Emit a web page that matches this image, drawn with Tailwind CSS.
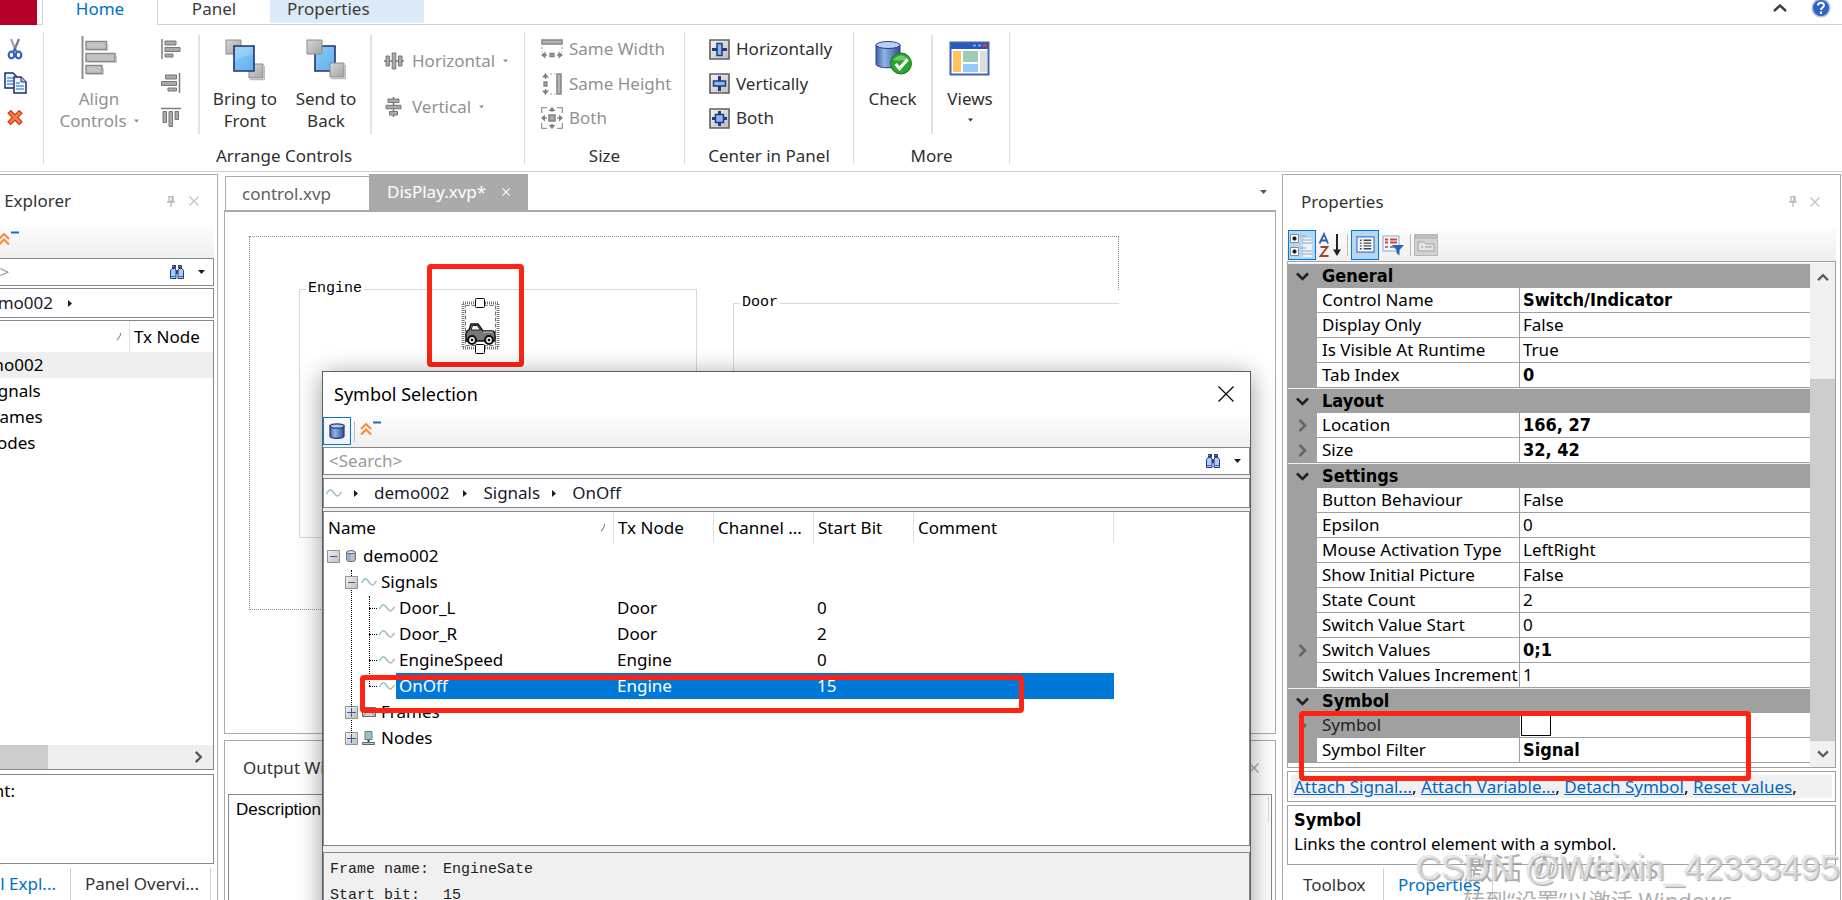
<!DOCTYPE html>
<html lang="en">
<head>
    <meta charset="UTF-8">
    <meta name="viewport" content="width=device-width, initial-scale=1.0">
    <title>Panel Designer</title>
    <script src="https://cdn.jsdelivr.net/npm/@tailwindcss/browser@4"></script>
</head>
<body class="relative flex h-screen flex-col overflow-hidden bg-white font-['Noto_Sans','Noto_Sans_CJK_SC',sans-serif] text-[17px] leading-6 text-black">

    <!-- Shared icons -->
    <svg class="absolute h-0 w-0">
        <defs>
            <linearGradient id="gGrey" x1="0" y1="0" x2="1" y2="1"><stop offset="0" stop-color="#d6d6d6"/><stop offset="1" stop-color="#a4a4a4"/></linearGradient>
            <linearGradient id="gSky" x1="0" y1="0" x2="1" y2="1"><stop offset="0" stop-color="#8ccbf5"/><stop offset="1" stop-color="#5fb0ee"/></linearGradient>
            <linearGradient id="gDb" x1="0" y1="0" x2="1" y2="0"><stop offset="0" stop-color="#3f62ab"/><stop offset="0.35" stop-color="#8fb4e6"/><stop offset="1" stop-color="#2f4f97"/></linearGradient>
            <linearGradient id="gBox" x1="0" y1="0" x2="1" y2="1"><stop offset="0" stop-color="#f4f4f4"/><stop offset="1" stop-color="#bdbdbd"/></linearGradient>
        </defs>
        <symbol id="pin" viewBox="0 0 8 11"><path d="M2 .5h4v5H2zM0 6h8M4 6v5M5 1v4" fill="none" stroke="#b9b9b9" stroke-width="1.3"/></symbol>
        <symbol id="cross" viewBox="0 0 10 10"><path d="M.5.5l9 9M9.500.5l-9 9" fill="none" stroke="currentColor" stroke-width="1.3"/></symbol>
        <symbol id="down" viewBox="0 0 7 4"><path d="M0 0h7L3.500 4z" fill="currentColor"/></symbol>
        <symbol id="right" viewBox="0 0 4 7"><path d="M0 0v7l4-3.500z" fill="currentColor"/></symbol>
        <symbol id="sort" viewBox="0 0 5 8"><path d="M4.500 0v2L1 7.500" fill="none" stroke="#8a8a8a" stroke-width="1.200"/></symbol>
        <symbol id="chevDown" viewBox="0 0 13 9"><path d="M1 1.500l5.500 5.500L12 1.500" fill="none" stroke="currentColor" stroke-width="2.600"/></symbol>
        <symbol id="chevRight" viewBox="0 0 9 13"><path d="M1.500 1l5.500 5.500L1.500 12" fill="none" stroke="currentColor" stroke-width="2.600"/></symbol>
        <symbol id="binocs" viewBox="0 0 14 14">
            <path d="M.5 5.500L2 3.500h3l1 2v8H.5zM13.500 5.500L12 3.500H9l-1 2v8h5.500z" fill="#9fd0ff" stroke="#2c3570"/>
            <path d="M2 0h4v3.500H2zM8 0h4v3.500H8zM6 5h2v4H6z" fill="#3a3f6e"/><path d="M1 11.500h4.500M8.500 11.500H13" stroke="#4668b0"/><path d="M2.500 1.500h1M9.500 1.500h1" stroke="#9fb4e0"/>
        </symbol>
        <symbol id="collapse" viewBox="0 0 21 14">
            <path d="M1 8l5-5 5 5M1 13.500l5-5 5 5" fill="none" stroke="#ff8a3d" stroke-width="2.200"/><path d="M13 1.500h8" stroke="#1a6fc4" stroke-width="2"/>
        </symbol>
        <symbol id="wave" viewBox="0 0 16 10">
            <path d="M.5 6C2.500 2.500 4 1.500 5 2c1.600.6 2.200 2 3.200 3.400" fill="none" stroke="#8fc4cf" stroke-width="1.500"/>
            <path d="M8 5c1.200 1.700 2.200 3 3.400 3 1.400 0 2.500-1.500 4.100-4" fill="none" stroke="#b5b5b5" stroke-width="1.500"/>
        </symbol>
        <symbol id="dbBlue" viewBox="0 0 16 16">
            <path d="M1 3v10c0 3 14 3 14 0V3z" fill="url(#gDb)" stroke="#353a7d" stroke-width="1.300"/><ellipse cx="8" cy="3" rx="7" ry="2.200" fill="#a8c8f0" stroke="#353a7d" stroke-width="1.300"/>
        </symbol>
        <symbol id="dbGrey" viewBox="0 0 10 12">
            <path d="M.7 2v8c0 2 8.600 2 8.600 0V2z" fill="#bfc3cc" stroke="#5a5f70"/><path d="M1.500 3.500h3v7h-3z" fill="#8cb2d4"/><ellipse cx="5" cy="2.200" rx="4.300" ry="1.600" fill="#dfe6ee" stroke="#5a5f70"/>
        </symbol>
        <symbol id="minus" viewBox="0 0 13 13"><path d="M.5.5h12v12H.5z" fill="url(#gBox)" stroke="#929292"/><path d="M3 6.500h7" stroke="#3a56a5"/></symbol>
        <symbol id="plus" viewBox="0 0 13 13"><path d="M.5.5h12v12H.5z" fill="url(#gBox)" stroke="#929292"/><path d="M2 6.500h9M6.500 2v9" stroke="#3a56a5"/></symbol>
    </svg>

    <!-- Ribbon tabs -->
    <nav class="flex h-[25px] shrink-0 items-stretch text-[#3c3c3c]">
        <button class="w-[37px] bg-[#b5002c]" aria-label="File"></button>
        <div class="w-[5px] border-b border-[#d0d0d0]"></div>
        <a href="#" class="flex w-[116px] items-start justify-center border-x border-[#d0d0d0] leading-[18px] text-[#0070c8]">Home</a>
        <a href="#" class="flex w-[112px] items-start justify-center border-b border-[#d0d0d0] leading-[18px]">Panel</a>
        <div class="flex w-[154px] border-b border-[#d0d0d0]"><a href="#" class="h-[23px] w-full bg-[#dce9f7] pl-[17px] leading-[18px]">Properties</a></div>
        <div class="flex flex-1 items-start justify-end gap-6 border-b border-[#d0d0d0] pr-[11px]">
            <button aria-label="Collapse ribbon" class="pt-1"><svg class="h-2 w-3.5" viewBox="0 0 14 8"><path d="M1 7l6-5.500L13 7" fill="none" stroke="#3f3f3f" stroke-width="2.400"/></svg></button>
            <button aria-label="Help"><svg class="h-[18px] w-5" viewBox="0 2 20 18"><circle cx="10" cy="10" r="8.800" fill="#2f62c4" stroke="#b4c4dc" stroke-width="1.600"/><path d="M7 7.500C7 4 13 4 13 7.200c0 2.300-3 2.300-3 4.800M10 13.500V16" fill="none" stroke="#fff" stroke-width="2"/></svg></button>
        </div>
    </nav>

    <!-- Ribbon -->
    <section class="flex h-[147px] shrink-0 border-b border-[#d0d0d0] pt-[7px] pb-[7px] text-[#303030]">
        <div class="flex w-11 flex-col border-r border-[#dcdcdc]">
            <button class="flex h-[34px] items-center pl-[7px]" aria-label="Cut">
                <svg class="h-[22px] w-4" viewBox="0 0 16 22"><path d="M4 1l5.500 13" stroke="#9aa7b8" stroke-width="2.200"/><path d="M12 1L6.500 14" stroke="#6d7c90" stroke-width="2.200"/><ellipse cx="4.500" cy="17" rx="2.800" ry="3.400" fill="none" stroke="#2f5fc2" stroke-width="2.200"/><ellipse cx="11.500" cy="17" rx="2.800" ry="3.400" fill="none" stroke="#2f5fc2" stroke-width="2.200"/><path d="M6 13l2-3 2 3z" fill="#2f5fc2"/></svg>
            </button>
            <button class="flex h-[34px] items-center pl-1" aria-label="Copy">
                <svg class="h-[22px] w-[23px]" viewBox="0 0 23 22"><path d="M1 1h8l4 4v11H1z" fill="#f3f8ff" stroke="#22287a" stroke-width="1.500"/><path d="M3 6h6M3 9h6M3 12h6" stroke="#4e9be0" stroke-width="1.300"/><path d="M10 5h7l5 5v11H10z" fill="#f3f8ff" stroke="#22287a" stroke-width="1.500"/><path d="M17 5v5h5" fill="#b7c6e8" stroke="#22287a"/><path d="M12 11h4M12 14h8M12 17h8" stroke="#4e9be0" stroke-width="1.500"/></svg>
            </button>
            <button class="flex h-[34px] items-center pl-[7px]" aria-label="Delete">
                <svg class="h-[15px] w-4" viewBox="0 0 16 16"><path d="M3.500 3.500l9 9M12.500 3.500l-9 9" stroke="#d23a14" stroke-width="5.400" stroke-linecap="square"/><path d="M3.500 3.500l9 9M12.500 3.500l-9 9" stroke="#ff7f50" stroke-width="2.600" stroke-linecap="square"/></svg>
            </button>
        </div>

        <div class="flex w-[481px] flex-col justify-between border-r border-[#dcdcdc]">
            <div class="flex h-[105px] pl-3">
                <button class="flex w-[86px] flex-col items-center pt-1 leading-[22px] text-[#919191]">
                    <svg class="mb-2 h-11 w-9" viewBox="0 0 36 44"><path d="M1.500 0v43" stroke="#8f8f8f" stroke-width="2"/><g stroke="#8a8a8a" stroke-width="1.400" fill="#c2c2c2"><path d="M5 5.500h20.500v8H5zM5 17.500h29v8H5zM5 29.500h16v8H5z"/></g><path d="M7 14.500h20V8M7 26.500h28.500V20M7 38.500h15.500V32" fill="none" stroke="#c9c9c9"/></svg>
                    <span>Align</span>
                    <span class="flex items-center gap-[7px]">Controls <svg class="h-1 w-[5px]"><use href="#down"/></svg></span>
                </button>
                <div class="flex w-14 flex-col items-center pl-0.5">
                    <button class="flex h-[34px] items-center" aria-label="Align left"><svg class="h-5 w-5" viewBox="0 0 20 20"><path d="M1 0v20" stroke="#7d7d7d" stroke-width="1.500"/><path d="M4 2h11v4H4zM4 8.500h15v4H4zM4 15h8v3H4z" fill="#aaa" stroke="#777"/></svg></button>
                    <button class="flex h-[34px] items-center" aria-label="Align right"><svg class="h-5 w-5" viewBox="0 0 20 20"><path d="M18.500 0v20" stroke="#7d7d7d" stroke-width="1.500"/><path d="M4.500 2h11v4h-11zM.5 8.500h15v4H.5zM7 15h8.500v3H7z" fill="#aaa" stroke="#777"/></svg></button>
                    <button class="flex h-[34px] items-center" aria-label="Align top"><svg class="h-5 w-5" viewBox="0 0 20 20"><path d="M0 1.500h20" stroke="#7d7d7d" stroke-width="1.500"/><path d="M2 4.500h3.500v11H2zM8 4.500h3.500v15H8zM14 4.500h3.500v8H14z" fill="#aaa" stroke="#777"/></svg></button>
                </div>
                <div class="my-[3px] w-0.5 bg-[#e2e2e2]"></div>
                <button class="flex w-[90px] flex-col items-center pt-[7px] leading-[22px]">
                    <svg class="mb-[7px] h-[42px] w-10" viewBox="0 0 40 42"><path d="M1 1h15v14H1z" fill="url(#gGrey)" stroke="#8b8b8b"/><path d="M24 25h14v14H24z" fill="url(#gGrey)" stroke="#8b8b8b"/><path d="M25 40.500h14.500V27" fill="none" stroke="#bbb" stroke-width="1.500"/><path d="M9 7h20v25H9z" fill="url(#gSky)" stroke="#25306f" stroke-width="1.600"/><path d="M10 8h18v8q-9 0-18 6z" fill="#fff" opacity=".2"/></svg>
                    <span>Bring to</span><span>Front</span>
                </button>
                <button class="flex w-[72px] flex-col items-center pt-[7px] leading-[22px]">
                    <svg class="mb-[7px] h-[42px] w-10" viewBox="0 0 40 42"><path d="M9 7h20v25H9z" fill="url(#gSky)" stroke="#25306f" stroke-width="1.600"/><path d="M1 1h15v14H1z" fill="url(#gGrey)" stroke="#8b8b8b"/><path d="M24 24h14v14H24z" fill="url(#gGrey)" stroke="#8b8b8b"/><path d="M25 39.500h14.500V26" fill="none" stroke="#bbb" stroke-width="1.500"/></svg>
                    <span>Send to</span><span>Back</span>
                </button>
                <div class="my-[3px] ml-2 w-0.5 bg-[#e2e2e2]"></div>
                <div class="flex flex-col pt-1.5 pl-3 text-[#919191]">
                    <button class="flex h-[46px] items-center gap-2">
                        <svg class="h-[18px] w-5" viewBox="0 0 20 18"><path d="M0 9h20" stroke="#777" stroke-width="1.500"/><path d="M2 4h3.500v10H2zM8.200 1h3.600v16H8.200zM14.500 4H18v10h-3.500z" fill="#aaa" stroke="#777"/></svg>
                        Horizontal <svg class="h-1 w-[5px]"><use href="#down"/></svg>
                    </button>
                    <button class="flex h-[46px] items-center gap-2">
                        <svg class="h-5 w-5" viewBox="0 0 20 20"><path d="M9.500 0v20" stroke="#777" stroke-width="1.500"/><path d="M4 2h11v3.500H4zM2 8.300h15v3.500H2zM5.500 14.500h8V18h-8z" fill="#aaa" stroke="#777"/></svg>
                        Vertical <svg class="h-1 w-[5px]"><use href="#down"/></svg>
                    </button>
                </div>
            </div>
            <div class="text-center leading-4">Arrange Controls</div>
        </div>

        <div class="flex w-40 flex-col justify-between border-r border-[#dcdcdc]">
            <div class="flex flex-col pl-4 text-[#919191]">
                <button class="flex h-[34px] items-center gap-1.5"><svg class="h-[22px] w-[22px]" viewBox="0 0 22 22"><path d="M1 2h20v4H1z" fill="#b5b5b5" stroke="#858585" stroke-width="1.500"/><path d="M1 9v5M21 9v5" stroke="#999" stroke-dasharray="2 2"/><path d="M0 17l4.500-3.500v7zM22 17l-4.500-3.500v7z" fill="#808080"/><path d="M3 17h3M16 17h3" stroke="#808080" stroke-width="1.500"/><path d="M9 15.500h4v3H9z" fill="#aaa" stroke="#808080" stroke-width="1.300"/></svg>Same Width</button>
                <button class="flex h-[35px] items-center gap-1.5"><svg class="h-[22px] w-[22px]" viewBox="0 0 22 22"><path d="M16 1h4v20h-4z" fill="#b5b5b5" stroke="#858585" stroke-width="1.500"/><path d="M9 1h5M9 21h5" stroke="#999" stroke-dasharray="2 2"/><path d="M4.500 0L1 4.500h7zM4.500 22L1 17.500h7z" fill="#808080"/><path d="M4.500 3v3M4.500 16v3" stroke="#808080" stroke-width="1.500"/><path d="M3 9h3v4H3z" fill="#aaa" stroke="#808080" stroke-width="1.300"/></svg>Same Height</button>
                <button class="flex h-[34px] items-center gap-1.5"><svg class="h-[22px] w-[22px]" viewBox="0 0 22 22"><path d="M6 .7H.7V6M16 .7h5.300V6M6 21.300H.7V16M16 21.300h5.300V16" fill="none" stroke="#999" stroke-width="1.300"/><path d="M11 0l3.500 4h-7zM11 22l3.500-4h-7zM0 11l4-3.500v7zM22 11l-4-3.500v7z" fill="#808080"/><path d="M3 11h3M16 11h3M11 3v2M11 17v2" stroke="#808080" stroke-width="1.500"/><path d="M8 8h6v6H8z" fill="#aaa" stroke="#808080" stroke-width="1.500"/></svg>Both</button>
            </div>
            <div class="text-center leading-4">Size</div>
        </div>

        <div class="flex w-[169px] flex-col justify-between border-r border-[#dcdcdc]">
            <div class="flex flex-col pl-6">
                <button class="flex h-[34px] items-center gap-1.5"><svg class="h-[21px] w-[21px]" viewBox="0 0 21 21"><path d="M1 1h19v19H1z" fill="url(#gBox)" stroke="#5f5f5f" stroke-width="1.600"/><path d="M3 10.500h15" stroke="#2b3478" stroke-width="3"/><path d="M8 4.500h5v12H8z" fill="#7cc0f2" stroke="#2b3478" stroke-width="1.500"/></svg>Horizontally</button>
                <button class="flex h-[35px] items-center gap-1.5"><svg class="h-[21px] w-[21px]" viewBox="0 0 21 21"><path d="M1 1h19v19H1z" fill="url(#gBox)" stroke="#5f5f5f" stroke-width="1.600"/><path d="M10.500 3v15" stroke="#2b3478" stroke-width="3"/><path d="M4.500 8h12v5h-12z" fill="#7cc0f2" stroke="#2b3478" stroke-width="1.500"/></svg>Vertically</button>
                <button class="flex h-[34px] items-center gap-1.5"><svg class="h-[21px] w-[21px]" viewBox="0 0 21 21"><path d="M1 1h19v19H1z" fill="url(#gBox)" stroke="#5f5f5f" stroke-width="1.600"/><path d="M10.500 3v15M3 10.500h15" stroke="#2b3478" stroke-width="3"/><path d="M6.500 6.500h8v8h-8z" fill="#7cc0f2" stroke="#2b3478" stroke-width="1.500"/></svg>Both</button>
            </div>
            <div class="text-center leading-4">Center in Panel</div>
        </div>

        <div class="flex w-[156px] flex-col justify-between border-r border-[#dcdcdc]">
            <div class="flex h-[105px]">
                <button class="flex w-[77px] flex-col items-center pt-2 leading-[22px]">
                    <svg class="mb-2.5 h-[38px] w-[38px]" viewBox="0 0 38 38"><path d="M2 5v19c0 5 24 5 24 0V5z" fill="url(#gDb)" stroke="#2d3c80"/><ellipse cx="14" cy="5" rx="12" ry="3.500" fill="#b6d2f3" stroke="#2d3c80"/><circle cx="27" cy="23.500" r="10.500" fill="#2ea32e" stroke="#1b701d"/><path d="M19 20q8-9 16 0q-8 1-16 0z" fill="#fff" opacity=".35"/><path d="M21.500 24l4 4.500 8-9" fill="none" stroke="#fff" stroke-width="3.200"/></svg>
                    <span>Check</span>
                </button>
                <div class="my-[3px] w-0.5 bg-[#e2e2e2]"></div>
                <button class="flex w-[74px] flex-col items-center pt-2 leading-[22px]">
                    <svg class="mb-2.5 h-[38px] w-[42px]" viewBox="0 0 42 38"><path d="M1.500 2.500h38v32h-38z" fill="#fff" stroke="#4363b5" stroke-width="2"/><path d="M2 3h37v6H2z" fill="#2d56c0"/><path d="M24 5.500h3M29 5.500h3" stroke="#9db8f0" stroke-width="1.600"/><path d="M34 4h3.500v3H34z" fill="#e43a2a"/><path d="M4 11h8v21H4z" fill="#ffc45c"/><path d="M14 11h15v11H14z" fill="#9ccdb8"/><path d="M14 24h15v8H14z" fill="#94c9fb"/><path d="M31 11h7v21h-7z" fill="#dedede"/></svg>
                    <span>Views</span>
                    <svg class="mt-2 h-1 w-[5px]"><use href="#down"/></svg>
                </button>
            </div>
            <div class="text-center leading-4">More</div>
        </div>
    </section>

    <main class="flex min-h-0 flex-1 gap-1.5 pt-0.5 pr-px">
        <!-- Symbol explorer -->
        <aside class="flex w-[218px] shrink-0 flex-col border-t border-r border-[#a9a9a9] pr-[3px]">
            <div class="flex h-[52px] shrink-0 items-center text-[#333]">
                <div class="flex w-[71px] justify-end overflow-hidden whitespace-nowrap">Symbol Explorer</div>
                <button class="ml-auto" aria-label="Pin"><svg class="h-[11px] w-2"><use href="#pin"/></svg></button>
                <button class="mr-[15px] ml-3.5 text-[#c3c3c3]" aria-label="Close"><svg class="h-2.5 w-2.5"><use href="#cross"/></svg></button>
            </div>
            <div class="h-[31px] shrink-0 bg-linear-to-b from-[#fcfcfc] to-[#efefef] pt-1">
                <button class="-ml-0.5 block" aria-label="Collapse all"><svg class="h-3.5 w-[21px]"><use href="#collapse"/></svg></button>
            </div>
            <div class="mb-0.5 flex h-7 shrink-0 items-center border border-l-0 border-[#828790] pr-2">
                <div class="flex w-2.5 justify-end"><input type="text" placeholder="&lt;Search&gt;" aria-label="Search symbols" class="w-[74px] shrink-0 placeholder-[#999]"></div>
                <svg class="ml-auto h-3.5 w-3.5"><use href="#binocs"/></svg>
                <svg class="ml-3.5 h-1 w-[7px] text-[#1a1a2e]"><use href="#down"/></svg>
            </div>
            <div class="mb-0.5 flex h-[30px] shrink-0 items-center border border-l-0 border-[#828790] text-[#1a1a2e]">
                <div class="flex w-[53px] justify-end overflow-hidden">demo002</div>
                <svg class="ml-[15px] h-[7px] w-1"><use href="#right"/></svg>
            </div>
            <div class="flex min-h-0 flex-1 flex-col border border-l-0 border-[#828790]">
                <div class="flex h-[31px] shrink-0 items-center">
                    <div class="flex h-full w-[130px] items-center justify-end border-r border-[#e0e0e0] pr-2"><svg class="h-2 w-[5px]"><use href="#sort"/></svg></div>
                    <div class="pl-1">Tx Node</div>
                </div>
                <ul class="flex-1 overflow-hidden leading-[26px]">
                    <li class="flex bg-[#efefef]"><span class="-ml-8">demo002</span></li>
                    <li class="flex"><span class="-ml-4">Signals</span></li>
                    <li class="flex"><span class="-ml-4">Frames</span></li>
                    <li class="flex"><span class="-ml-4">Nodes</span></li>
                </ul>
                <div class="flex h-6 shrink-0 items-center bg-[#efefef] pr-2.5">
                    <div class="h-full w-12 bg-[#cdcdcd]"></div>
                    <svg class="ml-auto h-3 w-[9px] text-[#5a5a5a]"><use href="#chevRight"/></svg>
                </div>
            </div>
            <div class="mt-1 flex h-[90px] shrink-0 border border-l-0 border-[#828790] pt-1">
                <div class="flex w-[15px] justify-end">Comment:</div>
            </div>
            <div class="flex h-9 shrink-0 pt-1 text-[#333]">
                <a href="#" class="flex w-[71px] justify-end border-r border-[#d0d0d0] pt-1 pr-3.5 whitespace-nowrap text-[#0070c8]">Symbol Expl...</a>
                <a href="#" class="flex-1 border-r border-[#d0d0d0] pt-1 pl-3.5 whitespace-nowrap">Panel Overvi...</a>
                <div class="w-[3px]"></div>
            </div>
        </aside>

        <!-- Designer and output -->
        <div class="flex min-w-0 flex-1 flex-col">
            <div class="flex h-9 shrink-0 items-end">
                <a href="#" class="ml-px flex h-[34px] w-36 items-center border border-r-0 border-b-0 border-[#aaa] pl-4 text-[#606060]">control.xvp</a>
                <a href="#" class="flex h-9 w-[159px] items-center gap-4 bg-[#aaa] pl-[18px] text-white">DisPlay.xvp* <svg class="h-2 w-2"><use href="#cross"/></svg></a>
                <button class="mr-[9px] mb-4 ml-auto text-[#555]" aria-label="Document list"><svg class="h-1 w-[7px]"><use href="#down"/></svg></button>
            </div>
            <!-- Free form design canvas -->
            <div class="relative flex-1 overflow-hidden border border-t-2 border-[#aaa]">
                <div class="absolute top-6 left-6 h-[374px] w-[870px] border border-dotted border-[#8c8c8c]"></div>
                <div class="absolute top-[79px] left-[508px] h-[300px] w-[386px] bg-white"></div>
                <fieldset class="absolute top-[65px] left-[74px] h-[261px] w-[398px] border border-[#d8d8d8]">
                    <legend class="ml-1.5 px-0.5 font-['Liberation_Mono',monospace] text-[15px]">Engine</legend>
                </fieldset>
                <fieldset class="absolute top-[79px] left-[508px] h-[300px] w-[386px] border border-r-0 border-[#d8d8d8]">
                    <legend class="ml-1.5 px-0.5 font-['Liberation_Mono',monospace] text-[15px]">Door</legend>
                </fieldset>
                <svg class="absolute top-[85px] left-[236px] h-[58px] w-10" viewBox="0 0 40 58">
                    <path d="M2 6h35v45H2z" fill="#fff" stroke="#777" stroke-width="3" stroke-dasharray="1 1"/>
                    <path d="M4.500 8.500h30v40h-30z" fill="none" stroke="#777" stroke-dasharray="4 2"/>
                    <path d="M5 44v-7q0-3 3-4l2-6h7l5 7h10q2 1 2 4v6z" fill="#777" stroke="#111" stroke-width="1.400"/>
                    <path d="M10 33l1.500-4.500H16l3.500 4.500z" fill="#f2f2f2" stroke="#222"/>
                    <path d="M22 35h10" stroke="#ccc"/><circle cx="11" cy="43" r="4" fill="#eee" stroke="#111" stroke-width="2.200"/><circle cx="28" cy="43" r="4" fill="#eee" stroke="#111" stroke-width="2.200"/><circle cx="11" cy="43" r="1.300"/><circle cx="28" cy="43" r="1.300"/>
                    <rect x="14.500" y="1.500" width="9" height="9" rx="1" fill="#fff" stroke="#000"/><rect x="14.500" y="47.500" width="9" height="9" rx="1" fill="#fff" stroke="#000"/>
                </svg>
                <div class="absolute top-[52px] left-[202px] h-[103px] w-[97px] rounded border-5 border-[#ff2314]"></div>
            </div>
            <div class="mt-1.5 flex h-40 shrink-0 flex-col border border-b-0 border-[#a9a9a9] px-[3px]">
                <div class="flex h-[53px] shrink-0 items-center pl-[15px] text-[#333]">
                    Output Window
                    <button class="mr-[13px] ml-auto text-[#aaa]" aria-label="Close"><svg class="h-2.5 w-2.5"><use href="#cross"/></svg></button>
                </div>
                <div class="flex-1 border border-b-0 border-[#828790] pt-px pr-0.5">
                    <div class="h-[26px] border-r border-[#dcdcdc] pl-[7px] font-['Liberation_Sans',sans-serif] leading-7">Description</div>
                </div>
            </div>
        </div>

        <!-- Properties -->
        <aside class="flex w-[559px] shrink-0 flex-col border border-b-0 border-[#a9a9a9] px-1">
            <div class="flex h-[53px] shrink-0 items-center pl-3.5 text-[#333]">
                Properties
                <button class="ml-auto" aria-label="Pin"><svg class="h-[11px] w-2"><use href="#pin"/></svg></button>
                <button class="mr-4 ml-[13px] text-[#c3c3c3]" aria-label="Close"><svg class="h-2.5 w-2.5"><use href="#cross"/></svg></button>
            </div>
            <div class="flex h-[33px] shrink-0 items-center bg-linear-to-b from-[#fcfcfc] to-[#efefef] pl-px">
                <button class="h-[30px] w-7 border border-[#0078d7] bg-[#b5d7f3]" aria-label="Categorized">
                    <svg class="h-[26px] w-6" viewBox="0 0 24 26"><g fill="#fff" stroke="#8a8a8a"><path d="M1.500 2.500h8v8h-8zM1.500 15.500h8v8h-8z"/></g><path d="M3.500 6.500h4M5.500 4.500v4M3.500 19.500h4M5.500 17.500v4" stroke="#000" stroke-width="2"/><path d="M14 6h9v19h-9z" fill="#fff" opacity=".7"/><path d="M11 4h6M13 8h10M13 11h10M11 16h6M13 19h10M13 22h10" stroke="#9aa5b2" stroke-width="1.200"/></svg>
                </button>
                <button class="ml-0.5 h-[30px] w-[26px]" aria-label="Alphabetical">
                    <svg class="h-[26px] w-[26px]" viewBox="0 0 26 26"><path d="M1.500 11.500L6 2l4 9.500M3 8.500h6" fill="none" stroke="#2f5cb4" stroke-width="1.800"/><path d="M2.500 15h7L2.500 24h8" fill="none" stroke="#a3403a" stroke-width="1.800"/><path d="M19 2v19" stroke="#222" stroke-width="2"/><path d="M15 17.500h8L19 24z" fill="#222"/></svg>
                </button>
                <div class="mx-[3px] h-[22px] w-px bg-[#bdbdbd]"></div>
                <button class="h-[30px] w-7 border border-[#0078d7] bg-[#b5d7f3]" aria-label="Properties">
                    <svg class="mx-auto h-[19px] w-[19px]" viewBox="0 0 20 20"><path d="M1 2h18v16H1z" fill="#f6faff" stroke="#4a78c8" stroke-width="1.300"/><path d="M4 5.500h2M4 8.500h2M4 11.500h2M4 14.500h2M8 5.500h8M8 8.500h8M8 11.500h8M8 14.500h8" stroke="#444" stroke-width="1.400"/></svg>
                </button>
                <button class="mx-[3px] h-[30px] w-[22px]" aria-label="Filter">
                    <svg class="h-[22px] w-[22px]" viewBox="0 0 22 22"><path d="M1 2h16v15H1z" fill="#f6f6fa" stroke="#8ea6cc"/><path d="M3 5.500h3M8 5.500h7M3 8.500h3M8 8.500h7" stroke="#d4443c" stroke-width="1.800"/><path d="M3 13h3M8 13h4" stroke="#666" stroke-width="1.500"/><path d="M10 11h12l-4.500 5v5.500L14.500 19v-3z" fill="#2c62bd"/></svg>
                </button>
                <div class="mx-[3px] h-[22px] w-px bg-[#bdbdbd]"></div>
                <button class="h-[30px] w-6" aria-label="Property pages" disabled>
                    <svg class="h-6 w-6" viewBox="0 0 24 24"><path d="M.5 1.500h23v21H.5z" fill="#d2d2d2" stroke="#b5b5b5"/><path d="M1 2h22v4H1z" fill="#bdbdbd"/><path d="M4 18V9h6l2 2h8v7z" fill="#e4e4e4" stroke="#a3a3a3"/><path d="M7 14h2M11 14h7" stroke="#999"/></svg>
                </button>
            </div>
            <div class="flex min-h-0 flex-1 overflow-hidden border border-[#a0a0a0] pt-px">
                <table class="h-fit flex-1 table-fixed border-separate border-spacing-0">
                    <colgroup><col class="w-[29px]"><col class="w-[203px]"><col></colgroup>
                    <tbody id="propertyRows"></tbody>
                </table>
                <div class="flex w-[25px] shrink-0 flex-col items-center bg-[#f0f0f0] text-[#5a5a5a]">
                    <svg class="mt-2.5 h-2 w-3" viewBox="0 0 13 9"><path d="M1 8l5.500-5.500L12 8" fill="none" stroke="currentColor" stroke-width="2.600"/></svg>
                    <div class="mt-[98px] w-full flex-1 bg-[#cdcdcd]"></div>
                    <svg class="mt-[9px] mb-[9px] h-2 w-3"><use href="#chevDown"/></svg>
                </div>
            </div>
            <div class="my-[3px] h-[31px] shrink-0 border border-[#a0a0a0] p-[3px]">
                <div class="bg-[#f0f0f0] pl-[3px] leading-[23px] whitespace-nowrap">
                    <a href="#" class="text-[#0066cc] underline">Attach Signal...</a>, <a href="#" class="text-[#0066cc] underline">Attach Variable...</a>, <a href="#" class="text-[#0066cc] underline">Detach Symbol</a>, <a href="#" class="text-[#0066cc] underline">Reset values</a>,
                </div>
            </div>
            <div class="h-[60px] shrink-0 border border-[#a0a0a0] pt-0.5 pl-1.5">
                <div class="font-['DejaVu_Sans_Condensed',sans-serif] text-[18px] font-bold">Symbol</div>
                <div>Links the control element with a symbol.</div>
            </div>
            <div class="mt-[3px] flex h-8 shrink-0 text-[#333]">
                <a href="#" class="w-[97px] border-r border-[#d0d0d0] pt-[5px] pl-4">Toolbox</a>
                <a href="#" class="w-[109px] border-r border-[#d0d0d0] pt-[5px] pl-3.5 text-[#0070c8]">Properties</a>
            </div>
        </aside>
    </main>

    <!-- Symbol selection dialog -->
    <div role="dialog" aria-label="Symbol Selection" class="absolute top-[371px] right-[591px] -bottom-6 left-[322px] flex flex-col border border-[#5f5f5f] bg-[#f0f0f0] shadow-[0_4px_24px_rgba(0,0,0,0.4)]">
        <div class="flex h-11 shrink-0 items-center bg-white pr-4 pl-[11px] text-[18px]">
            Symbol Selection
            <button class="ml-auto" aria-label="Close"><svg class="h-4 w-4" viewBox="0 0 16 16"><path d="M.5.5l15 15M15.500.5l-15 15" stroke="#000" stroke-width="1.200"/></svg></button>
        </div>
        <div class="flex h-[31px] shrink-0 bg-linear-to-b from-[#fcfcfc] to-[#f0f0f0] pt-px">
            <button class="flex h-7 w-7 items-center justify-center border border-[#0078d7]" aria-label="Database"><svg class="h-4 w-4"><use href="#dbBlue"/></svg></button>
            <div class="mt-1 mr-[5px] ml-[3px] h-[21px] w-px bg-[#bdbdbd]"></div>
            <button class="mt-1 h-3.5" aria-label="Collapse all"><svg class="h-3.5 w-[21px]"><use href="#collapse"/></svg></button>
        </div>
        <div class="mb-[3px] flex h-7 shrink-0 items-center border border-[#828790] bg-white pr-2 pl-[5px]">
            <input type="text" placeholder="&lt;Search&gt;" aria-label="Search" class="flex-1 placeholder-[#999]">
            <svg class="h-3.5 w-3.5"><use href="#binocs"/></svg>
            <svg class="ml-3.5 h-1 w-[7px] text-[#1a1a2e]"><use href="#down"/></svg>
        </div>
        <div class="mb-[3px] flex h-[30px] shrink-0 items-center border border-[#828790] bg-white pl-0.5 text-[#1a1a2e]">
            <svg class="h-2.5 w-4"><use href="#wave"/></svg>
            <svg class="mr-4 ml-3 h-[7px] w-1"><use href="#right"/></svg>
            <a href="#">demo002</a>
            <svg class="mr-4 ml-3.5 h-[7px] w-1"><use href="#right"/></svg>
            <a href="#">Signals</a>
            <svg class="mr-4 ml-3 h-[7px] w-1"><use href="#right"/></svg>
            <a href="#">OnOff</a>
        </div>
        <div class="relative h-[335px] shrink-0 border border-[#828790] bg-white">
            <table class="table-fixed border-separate border-spacing-0 text-left leading-[26px]">
                <colgroup><col class="w-[290px]"><col class="w-[100px]"><col class="w-[100px]"><col class="w-[100px]"><col class="w-[200px]"></colgroup>
                <thead>
                    <tr class="h-[31px]">
                        <th class="border-r border-[#e0e0e0] p-0 font-normal"><div class="flex items-center justify-between pr-2 pl-1">Name <svg class="h-2 w-[5px]"><use href="#sort"/></svg></div></th>
                        <th class="border-r border-[#e0e0e0] p-0 pl-1 font-normal">Tx Node</th>
                        <th class="border-r border-[#e0e0e0] p-0 pl-1 font-normal whitespace-nowrap">Channel ...</th>
                        <th class="border-r border-[#e0e0e0] p-0 pl-1 font-normal">Start Bit</th>
                        <th class="border-r border-[#e0e0e0] p-0 pl-1 font-normal">Comment</th>
                    </tr>
                </thead>
                <tbody>
                    <tr>
                        <td class="p-0"><div class="flex items-center pl-[3px]"><svg class="mr-1.5 h-[13px] w-[13px]"><use href="#minus"/></svg><svg class="mr-[7px] h-3 w-2.5"><use href="#dbGrey"/></svg>demo002</div></td>
                        <td class="p-0"></td><td class="p-0"></td><td class="p-0"></td><td class="p-0"></td>
                    </tr>
                    <tr>
                        <td class="p-0"><div class="flex items-center pl-[21px]"><svg class="mr-[3px] h-[13px] w-[13px]"><use href="#minus"/></svg><svg class="mr-1 h-2.5 w-4"><use href="#wave"/></svg>Signals</div></td>
                        <td class="p-0"></td><td class="p-0"></td><td class="p-0"></td><td class="p-0"></td>
                    </tr>
                    <tr>
                        <td class="p-0"><div class="flex items-center pl-[45px]"><span class="w-2 border-t border-dotted border-black"></span><svg class="ml-0.5 h-2.5 w-4"><use href="#wave"/></svg><span class="pl-1">Door_L</span></div></td>
                        <td class="p-0 pl-[3px]">Door</td><td class="p-0"></td><td class="p-0 pl-[3px]">0</td><td class="p-0"></td>
                    </tr>
                    <tr>
                        <td class="p-0"><div class="flex items-center pl-[45px]"><span class="w-2 border-t border-dotted border-black"></span><svg class="ml-0.5 h-2.5 w-4"><use href="#wave"/></svg><span class="pl-1">Door_R</span></div></td>
                        <td class="p-0 pl-[3px]">Door</td><td class="p-0"></td><td class="p-0 pl-[3px]">2</td><td class="p-0"></td>
                    </tr>
                    <tr>
                        <td class="p-0"><div class="flex items-center pl-[45px]"><span class="w-2 border-t border-dotted border-black"></span><svg class="ml-0.5 h-2.5 w-4"><use href="#wave"/></svg><span class="pl-1">EngineSpeed</span></div></td>
                        <td class="p-0 pl-[3px]">Engine</td><td class="p-0"></td><td class="p-0 pl-[3px]">0</td><td class="p-0"></td>
                    </tr>
                    <tr class="text-white">
                        <td class="p-0"><div class="flex items-center pl-[45px]"><span class="w-2 border-t border-dotted border-black"></span><svg class="mr-px ml-0.5 h-2.5 w-4"><use href="#wave"/></svg><span class="flex-1 bg-[#0078d7] pl-[3px]">OnOff</span></div></td>
                        <td class="bg-[#0078d7] p-0 pl-[3px]">Engine</td><td class="bg-[#0078d7] p-0"></td><td class="bg-[#0078d7] p-0 pl-[3px]">15</td><td class="bg-[#0078d7] p-0"></td>
                    </tr>
                    <tr>
                        <td class="p-0"><div class="flex items-center pl-[21px]"><svg class="mr-1 h-[13px] w-[13px]"><use href="#plus"/></svg><svg class="mr-[5px] h-2.5 w-3.5" viewBox="0 0 14 10"><path d="M.5.5h13v9H.5z" fill="#c9d4d4" stroke="#6c6c6c"/><path d="M1 1l6 5 6-5M1 9l4-4M13 9L9 5" fill="none" stroke="#7d8c8c"/></svg>Frames</div></td>
                        <td class="p-0"></td><td class="p-0"></td><td class="p-0"></td><td class="p-0"></td>
                    </tr>
                    <tr>
                        <td class="p-0"><div class="flex items-center pl-[21px]"><svg class="mr-1 h-[13px] w-[13px]"><use href="#plus"/></svg><svg class="mr-[5px] h-3.5 w-3.5" viewBox="0 0 14 14"><path d="M3 .5h7v8H3z" fill="#8fc6cc" stroke="#777"/><path d="M6.500 9v3" stroke="#444" stroke-width="2"/><path d="M.5 11.500h12v2H.5z" fill="#b5cccc" stroke="#666"/></svg>Nodes</div></td>
                        <td class="p-0"></td><td class="p-0"></td><td class="p-0"></td><td class="p-0"></td>
                    </tr>
                </tbody>
            </table>
            <!-- Tree connector lines -->
            <div class="absolute top-[58px] left-[27px] h-1.5 border-l border-dotted border-black"></div>
            <div class="absolute top-[78px] left-[27px] h-[117px] border-l border-dotted border-black"></div>
            <div class="absolute top-[208px] left-[27px] h-[13px] border-l border-dotted border-black"></div>
            <div class="absolute top-[84px] left-[45px] h-[90px] border-l border-dotted border-black"></div>
        </div>
        <dl class="mt-1.5 grid flex-1 grid-cols-[113px_1fr] content-start border border-[#828790] pt-1 pl-1.5 font-['Liberation_Mono',monospace] text-[15px] leading-[26px] text-[#222]">
            <dt>Frame name:</dt><dd>EngineSate</dd>
            <dt>Start bit:</dt><dd>15</dd>
        </dl>
    </div>

    <!-- Highlight frames -->
    <div class="pointer-events-none absolute top-[675px] left-[360px] h-[38px] w-[664px] rounded border-5 border-[#ff2314]"></div>
    <div class="pointer-events-none absolute top-[711px] right-[91px] h-[70px] w-[452px] rounded border-5 border-[#ff2314]"></div>

    <!-- Watermarks -->
    <div class="pointer-events-none absolute top-[848px] right-[178px] w-[201px] text-[30px] leading-10 whitespace-nowrap text-[#8a8a8a]/70">激活 Windows</div>
    <div class="pointer-events-none absolute top-[886px] right-[78px] w-[301px] text-[22px] leading-7 whitespace-nowrap text-[#8a8a8a]/70">转到“设置”以激活 Windows。</div>
    <div class="pointer-events-none absolute top-[848px] right-0.5 font-['Liberation_Sans',sans-serif] text-[35px] leading-10 whitespace-nowrap text-white/50 [text-shadow:1px_1px_1px_#a5a5a5,-1px_-1px_1px_#e0e0e0]">CSDN @Weixin_42333495</div>

    <script>
        // Category rows have a group, the others a name and a value
        const properties = [
            { group: 'General' },
            { name: 'Control Name', value: 'Switch/Indicator', bold: true },
            { name: 'Display Only', value: 'False' },
            { name: 'Is Visible At Runtime', value: 'True' },
            { name: 'Tab Index', value: '0', bold: true },
            { group: 'Layout' },
            { name: 'Location', value: '166, 27', bold: true, expand: true },
            { name: 'Size', value: '32, 42', bold: true, expand: true },
            { group: 'Settings' },
            { name: 'Button Behaviour', value: 'False' },
            { name: 'Epsilon', value: '0' },
            { name: 'Mouse Activation Type', value: 'LeftRight' },
            { name: 'Show Initial Picture', value: 'False' },
            { name: 'State Count', value: '2' },
            { name: 'Switch Value Start', value: '0' },
            { name: 'Switch Values', value: '0;1', bold: true, expand: true },
            { name: 'Switch Values Increment', value: '1' },
            { group: 'Symbol' },
            { name: 'Symbol', edit: true, expand: true },
            { name: 'Symbol Filter', value: 'Signal', bold: true },
        ];

        document.getElementById('propertyRows').innerHTML = properties.map(p => {
            if (p.group) {
                return `<tr class="h-[25px] bg-[#a0a0a0]">
                    <td class="border-t border-[#f0f0f0] p-0"><svg class="mx-auto h-[9px] w-[13px] text-[#222]"><use href="#chevDown"/></svg></td>
                    <td colspan="2" class="border-t border-[#f0f0f0] p-0 pl-[5px] font-['DejaVu_Sans_Condensed',sans-serif] text-[18px] font-bold">${p.group}</td>
                </tr>`;
            }
            const arrow = p.expand ? '<svg class="mx-auto h-[13px] w-[9px] text-[#666]"><use href="#chevRight"/></svg>' : '';
            const nameClass = p.edit ? 'bg-[#a0a0a0] text-[#222]' : 'bg-white';
            const valueClass = p.bold ? "font-['DejaVu_Sans_Condensed',sans-serif] text-[18px] font-bold" : '';
            const value = p.edit
                ? '<input type="text" aria-label="Symbol value" class="block h-[22px] w-[30px] border border-black bg-white">'
                : p.value;
            return `<tr class="h-[25px]">
                <td class="bg-[#a0a0a0] p-0">${arrow}</td>
                <td class="border-r border-b border-[#a0a0a0] p-0 pl-[5px] whitespace-nowrap ${nameClass}">${p.name}</td>
                <td class="border-b border-[#a0a0a0] p-0 ${p.edit ? 'pl-px' : 'pl-[3px]'} ${valueClass}">${value}</td>
            </tr>`;
        }).join('');
    </script>
</body>
</html>
